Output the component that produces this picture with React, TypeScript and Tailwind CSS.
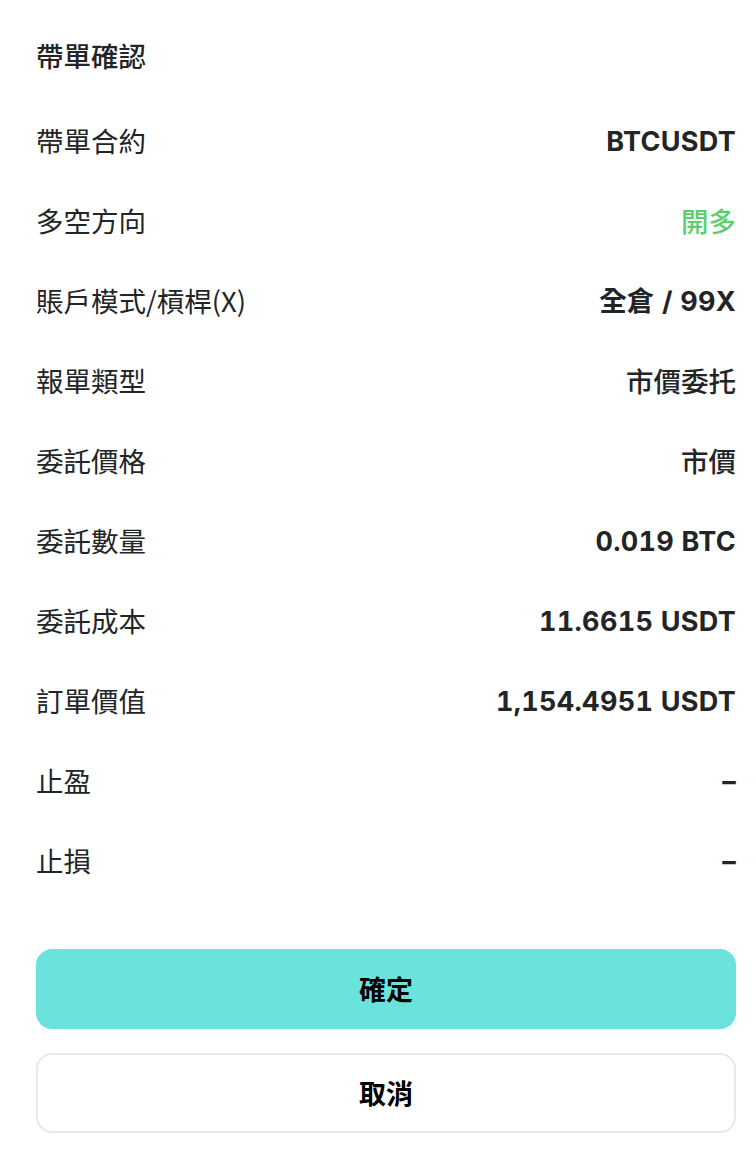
import React from "react";

type Part = { t: string; cjk?: boolean };
const rows: { label: string; value: Part[]; green?: boolean }[] = [
  { label: "帶單合約", value: [{ t: "BTCUSDT" }] },
  { label: "多空方向", value: [{ t: "開多", cjk: true }], green: true },
  { label: "賬戶模式/槓桿(X)", value: [{ t: "全倉", cjk: true }, { t: " / 99X" }] },
  { label: "報單類型", value: [{ t: "市價委托", cjk: true }] },
  { label: "委託價格", value: [{ t: "市價", cjk: true }] },
  { label: "委託數量", value: [{ t: "0.019 BTC" }] },
  { label: "委託成本", value: [{ t: "11.6615 USDT" }] },
  { label: "訂單價值", value: [{ t: "1,154.4951 USDT" }] },
  { label: "止盈", value: [{ t: "–" }] },
  { label: "止損", value: [{ t: "–" }] },
];

const cjkFont = { fontFamily: '"Noto Sans CJK TC", sans-serif' };
const latFont = { fontFamily: 'Inter, "Noto Sans CJK TC", sans-serif' };

export default function App() {
  return (
    <div className="w-[756px] h-[1166px] bg-white pl-[36px] pr-[20px] text-[#222426]" style={cjkFont}>
      <div className="pt-[39px] h-[100px] text-[27.5px] leading-[32px] font-medium">帶單確認</div>
      {rows.map((r) => (
        <div key={r.label} className="h-[80px] flex items-center justify-between text-[27.5px] leading-[32px]">
          <span>{r.label}</span>
          <span className={r.green ? "text-[#5ccf6a]" : ""}>
            {r.value.map((p, i) =>
              p.cjk ? (
                <span key={i} className={r.green || p.t !== "全倉" ? "font-medium" : "font-bold"} style={cjkFont}>
                  {p.t}
                </span>
              ) : (
                <span key={i} className="font-bold text-[27px] tabular-nums tracking-[0.3px]" style={latFont}>
                  {p.t}
                </span>
              )
            )}
          </span>
        </div>
      ))}
      <div className="mt-[49px] flex flex-col gap-[24px]">
        <button className="h-[80px] rounded-[16px] bg-[#6ae3dc] text-[27px] font-bold text-black">確定</button>
        <button className="h-[80px] rounded-[16px] border-2 border-[#e8e8e8] bg-white text-[27px] font-bold text-black">取消</button>
      </div>
    </div>
  );
}
